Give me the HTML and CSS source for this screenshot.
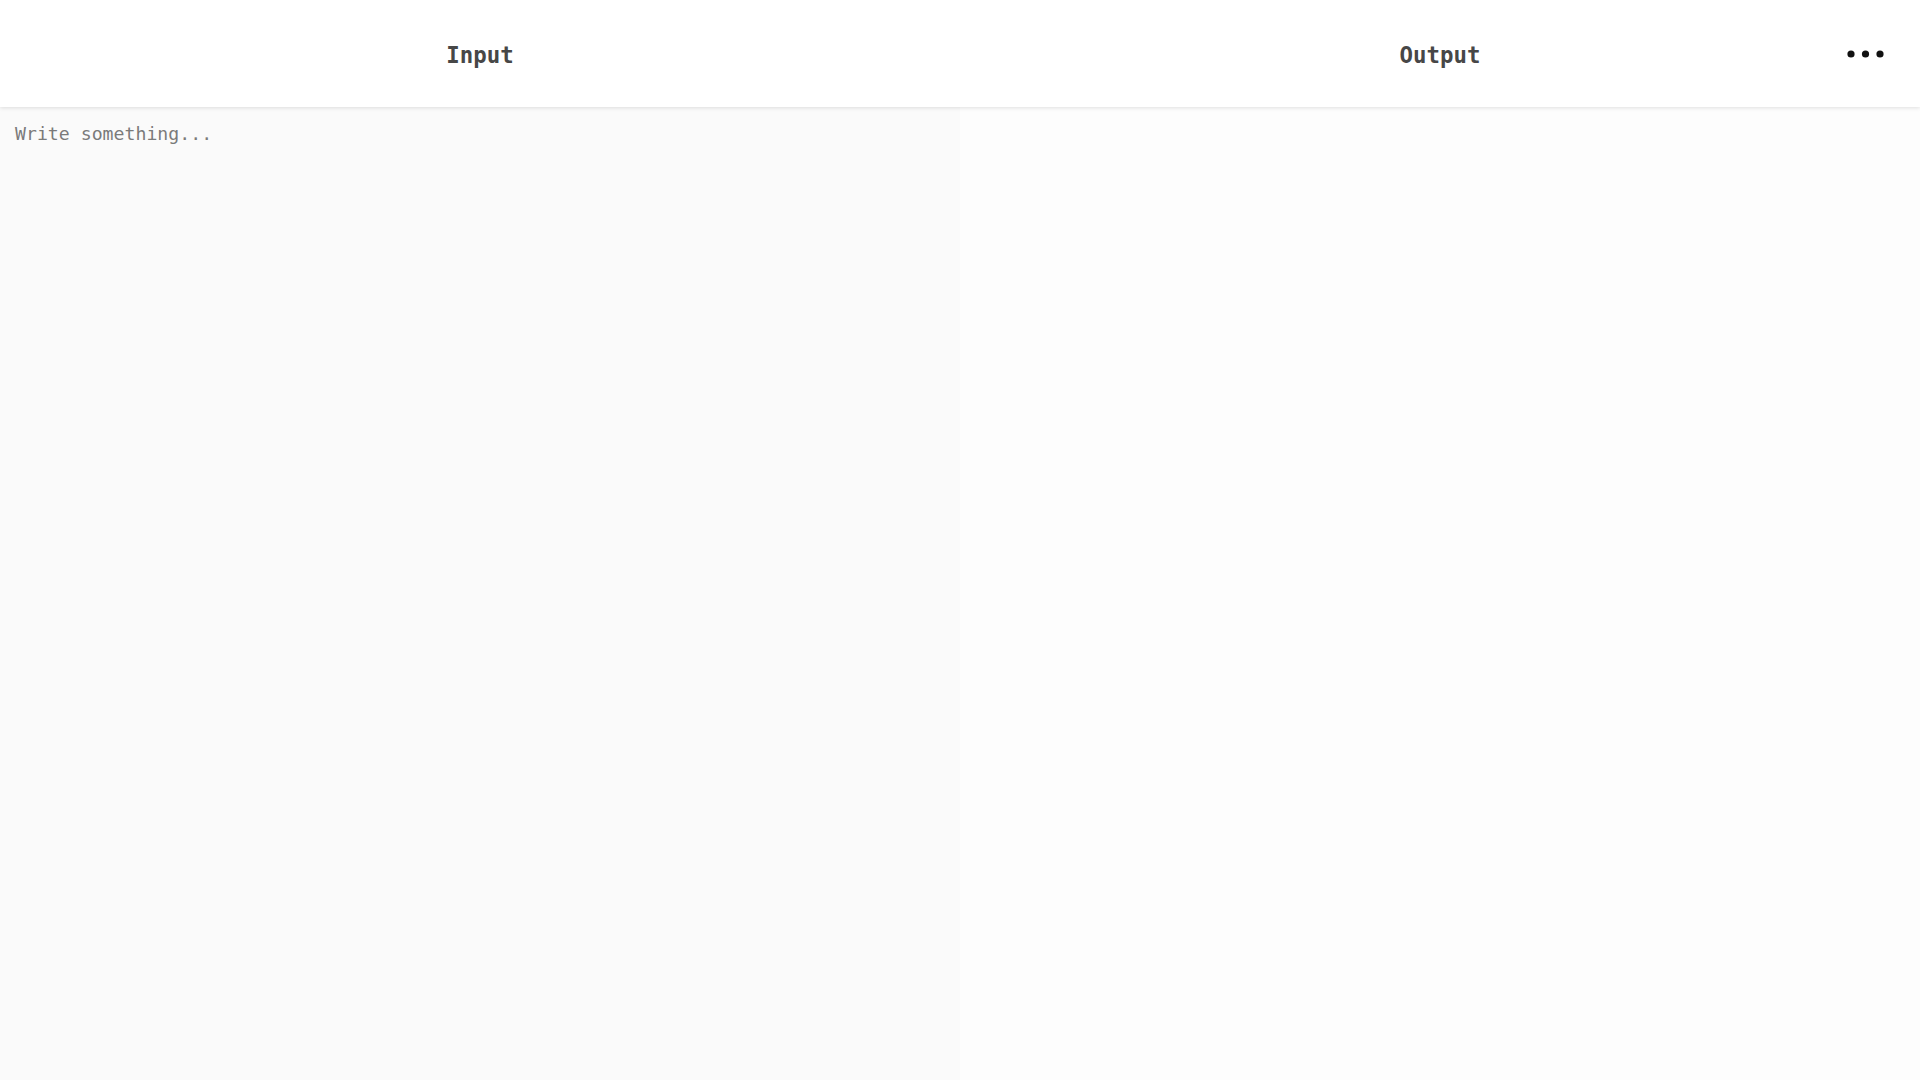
FILE: index.html
```html
<!DOCTYPE html>
<html>
<head>
<meta charset="utf-8">
<link rel="stylesheet" href="styles.css">
</head>
<body>
<div class="app">
  <header class="header">
    <div class="tab">Input</div>
    <div class="tab">Output</div>
    <button class="menu" aria-label="menu">
      <svg width="38" height="8" viewBox="0 0 38 8"><circle cx="4" cy="4" r="3.6"/><circle cx="18.5" cy="4" r="3.6"/><circle cx="33" cy="4" r="3.6"/></svg>
    </button>
  </header>
  <main class="panes">
    <div class="pane-left">
      <textarea class="input" placeholder="Write something..."></textarea>
    </div>
    <div class="output"></div>
  </main>
</div>
</body>
</html>
```
FILE: styles.css
```css
html, body {
  margin: 0;
  height: 100%;
}
body {
  font-family: "DejaVu Sans Mono", "Liberation Mono", monospace;
  background: #fdfdfd;
}
.app {
  display: flex;
  flex-direction: column;
  height: 100vh;
}
.header {
  position: relative;
  z-index: 2;
  height: 107px;
  flex: none;
  display: grid;
  grid-template-columns: 1fr 1fr;
  background: #ffffff;
  box-shadow: 0 1px 4px rgba(0,0,0,0.12);
}
.tab {
  display: flex;
  align-items: center;
  justify-content: center;
  font-size: 22.4px;
  font-weight: bold;
  color: #474747;
  padding-top: 2px;
}
.menu {
  position: absolute;
  right: 35px;
  top: 50px;
  padding: 0;
  border: 0;
  background: none;
  line-height: 0;
}
.menu svg { fill: #111; display: block; }
.panes {
  flex: 1;
  display: grid;
  grid-template-columns: minmax(0, 1fr) minmax(0, 1fr);
}
.pane-left {
  display: flex;
  background: #fafafa;
  min-width: 0;
}
.input {
  width: 100%;
  height: 100%;
  box-sizing: border-box;
  border: 0;
  outline: none;
  resize: none;
  margin: 0;
  padding: 15px 15px;
  background: #fafafa;
  font-family: "DejaVu Sans Mono", "Liberation Mono", monospace;
  font-size: 18.2px;
  line-height: 24px;
  color: #333;
}
.input::placeholder { color: #7a7a7a; }
.output {
  min-width: 0;
  background: #fdfdfd;
}
```
